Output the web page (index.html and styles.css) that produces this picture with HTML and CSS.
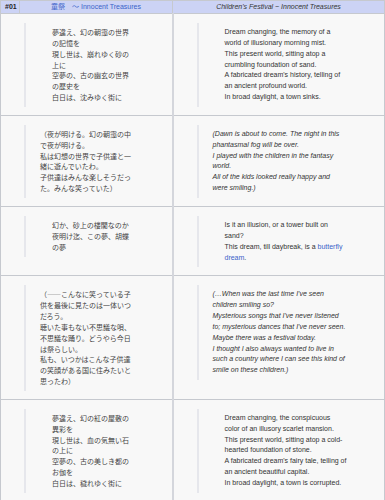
FILE: index.html
```html
<!DOCTYPE html>
<html lang="ja">

<head>
    <meta name="viewport" content="width=device-width, initial-scale=1.0">
    <title>童祭 ～ Innocent Treasures</title>
    <link rel="stylesheet" href="styles.css">
</head>

<body>
    <table class="lyrics">
        <colgroup>
            <col class="col-num">
            <col class="col-jp">
            <col class="col-en">
        </colgroup>
        <thead>
            <tr>
                <th class="num">#01</th>
                <th class="title-jp"><a href="#">童祭　～ Innocent Treasures</a></th>
                <th class="title-en">Children's Festival ~ Innocent Treasures</th>
            </tr>
        </thead>
        <tbody>
            <tr>
                <td colspan="2" class="jp">
                    <div class="verse sung">
                        夢違え、幻の朝靄の世界の記憶を<br>
                        現し世は、崩れゆく砂の上に<br>
                        空夢の、古の幽玄の世界の歴史を<br>
                        白日は、沈みゆく街に
                    </div>
                </td>
                <td class="en">
                    <div class="verse sung">
                        Dream changing, the memory of a world of illusionary morning mist.<br>
                        This present world, sitting atop a crumbling foundation of sand.<br>
                        A fabricated dream's history, telling of an ancient profound world.<br>
                        In broad daylight, a town sinks.
                    </div>
                </td>
            </tr>
            <tr>
                <td colspan="2" class="jp">
                    <div class="verse">
                        （夜が明ける。幻の朝靄の中で夜が明ける。<br>
                        私は幻想の世界で子供達と一緒に遊んでいたわ。<br>
                        子供達はみんな楽しそうだった。みんな笑っていた）
                    </div>
                </td>
                <td class="en">
                    <div class="verse spoken">
                        (Dawn is about to come. The night in this phantasmal fog will be over.<br>
                        I played with the children in the fantasy world.<br>
                        All of the kids looked really happy and were smiling.)
                    </div>
                </td>
            </tr>
            <tr>
                <td colspan="2" class="jp">
                    <div class="verse sung">
                        幻か、砂上の楼閣なのか<br>
                        夜明け迄、この夢、胡蝶の夢
                    </div>
                </td>
                <td class="en">
                    <div class="verse sung">
                        Is it an illusion, or a tower built on sand?<br>
                        This dream, till daybreak, is a <a href="#">butterfly dream</a>.
                    </div>
                </td>
            </tr>
            <tr>
                <td colspan="2" class="jp">
                    <div class="verse">
                        （――こんなに笑っている子供を最後に見たのは一体いつだろう。<br>
                        聴いた事もない不思議な唄、不思議な踊り。どうやら今日は祭らしい。<br>
                        私も、いつかはこんな子供達の笑顔がある国に住みたいと思ったわ）
                    </div>
                </td>
                <td class="en">
                    <div class="verse spoken">
                        (…When was the last time I've seen children smiling so?<br>
                        Mysterious songs that I've never listened to; mysterious dances that I've never seen.<br>
                        Maybe there was a festival today.<br>
                        I thought I also always wanted to live in such a country where I can see this kind of smile on these children.)
                    </div>
                </td>
            </tr>
            <tr>
                <td colspan="2" class="jp">
                    <div class="verse sung">
                        夢違え、幻の紅の屋敷の異彩を<br>
                        現し世は、血の気無い石の上に<br>
                        空夢の、古の美しき都のお伽を<br>
                        白日は、穢れゆく街に
                    </div>
                </td>
                <td class="en">
                    <div class="verse sung">
                        Dream changing, the conspicuous color of an illusory scarlet mansion.<br>
                        This present world, sitting atop a cold-hearted foundation of stone.<br>
                        A fabricated dream's fairy tale, telling of an ancient beautiful capital.<br>
                        In broad daylight, a town is corrupted.
                    </div>
                </td>
            </tr>
        </tbody>
    </table>
</body>

</html>
```

FILE: styles.css
```css
body {
    margin: 0;
    padding: 0;
    background-color: #fff;
    font-family: 'Liberation Sans', Arial, 'Noto Sans CJK JP', sans-serif;
    font-size: 7px;
    color: #333;
}

a {
    color: #3b63c9;
    text-decoration: none;
}

.lyrics {
    width: 385px;
    table-layout: fixed;
    border-collapse: collapse;
    background-color: #f8f8f8;
}

.col-num {
    width: 19px;
}

.col-jp {
    width: 153px;
}

.lyrics th,
.lyrics td {
    border: 1px solid #c6c9cf;
}

.lyrics th {
    background-color: #ccd3f5;
    font-weight: normal;
    line-height: 9px;
    padding: 1px 3px 2px;
    text-align: center;
    white-space: nowrap;
}

.lyrics th.num {
    text-align: left;
    font-weight: bold;
    padding-left: 4px;
    color: #222;
}

.title-jp {
    font-family: 'Liberation Sans', 'Noto Sans CJK JP', sans-serif;
}

.title-en {
    font-style: italic;
    color: #333;
}

.lyrics td {
    vertical-align: top;
    padding: 9px 38px 8px 23px;
    line-height: 10.85px;
}

.lyrics td.en {
    padding-right: 37.5px;
}

.lyrics td.jp {
    font-family: 'Noto Sans CJK JP', sans-serif;
    color: #444;
}

.lyrics td:last-child {
    border-left-width: 2px;
    border-left-color: #d4d6dc;
}

.verse {
    border-left: 2px solid #e6e7ec;
    padding: 4px 0 4px 14px;
}

.verse.sung {
    padding-left: 26px;
}

.verse.spoken {
    font-style: italic;
}
```
